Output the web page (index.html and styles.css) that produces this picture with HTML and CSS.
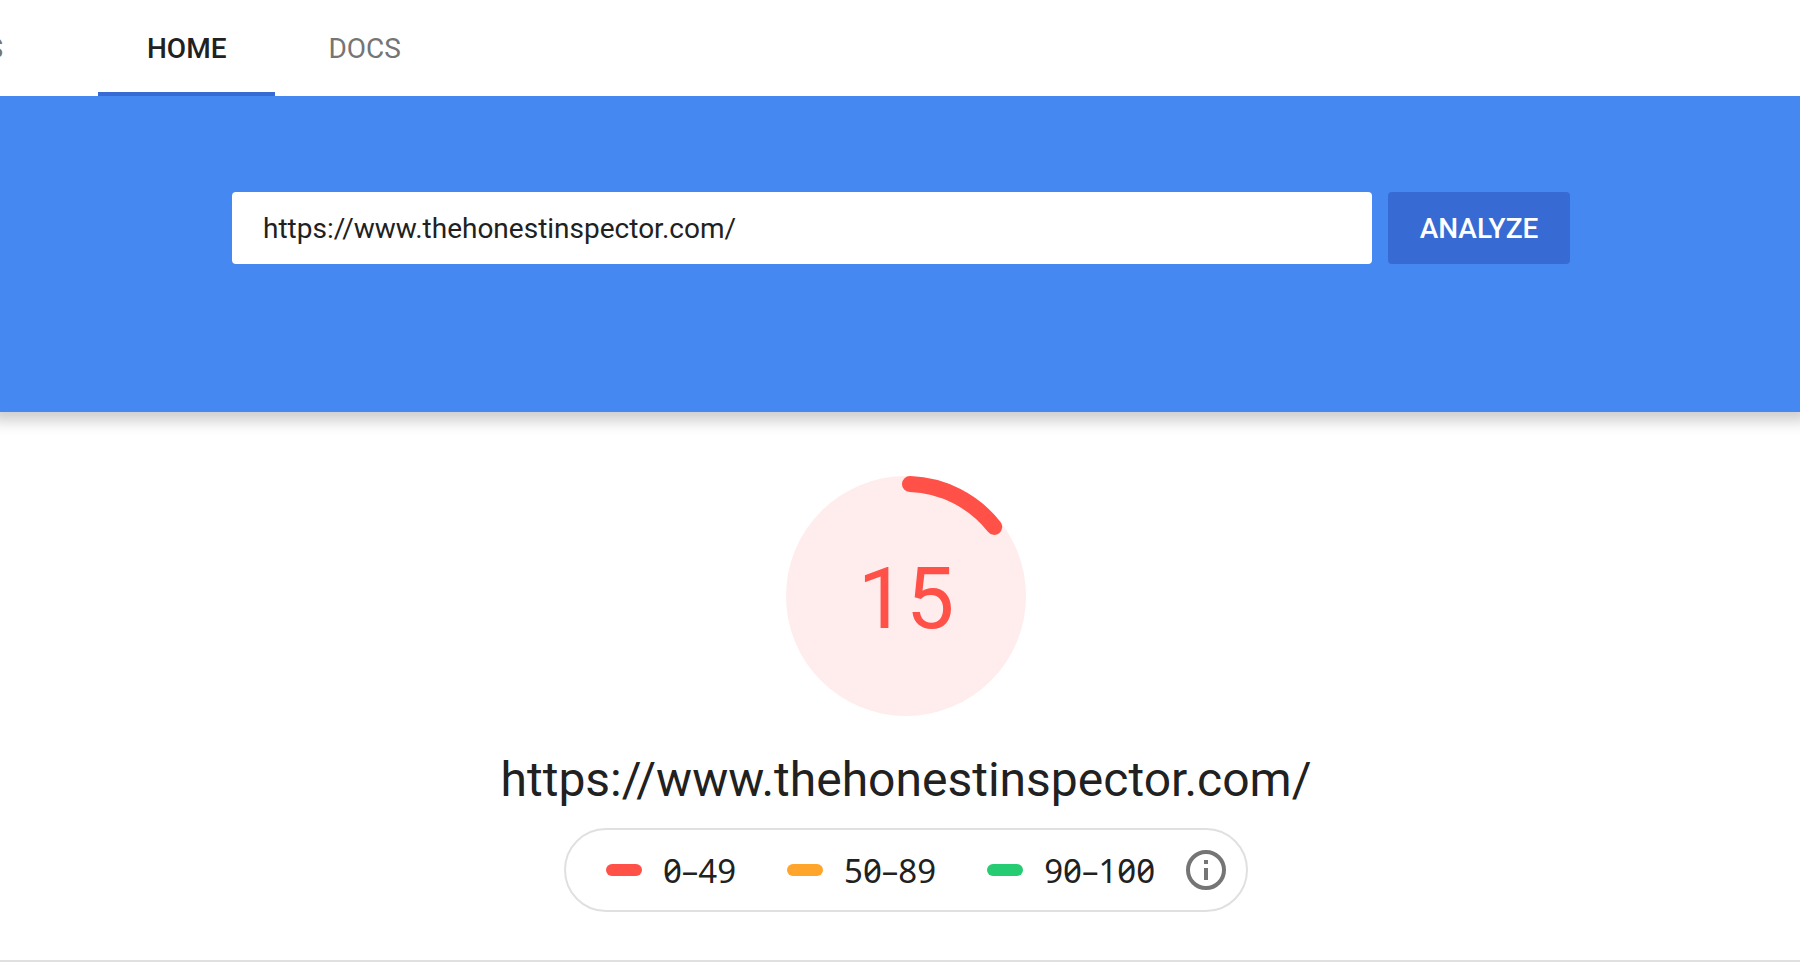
FILE: index.html
```html
<!doctype html>
<html lang="en">

<head>
    <meta charset="utf-8">
    <title>PageSpeed Insights</title>
    <link rel="stylesheet" href="styles.css">
</head>

<body>
    <header class="topbar">
        <span class="brand">S</span>
        <nav class="tabs">
            <a href="#home" class="tab active">HOME</a>
            <a href="#docs" class="tab">DOCS</a>
        </nav>
    </header>

    <form class="hero">
        <div class="search">
            <input type="text" class="url" name="url" aria-label="Web page URL" value="https://www.thehonestinspector.com/">
            <button type="submit" class="analyze">ANALYZE</button>
        </div>
    </form>

    <main class="report">
        <div class="gauge">
            <svg class="gauge-ring" viewBox="0 0 240 240">
                <circle cx="120" cy="120" r="120" fill="#ffeded" />
                <path d="M124 8.1A112 112 0 0 1 208.2 50.9" fill="none" stroke="#ff5148" stroke-width="16" stroke-linecap="round" />
            </svg>
            <span class="score">15</span>
        </div>

        <h1 class="tested">https://www.thehonestinspector.com/</h1>

        <div class="scale">
            <span class="range fail">0–49</span>
            <span class="range average">50–89</span>
            <span class="range pass">90–100</span>
            <button type="button" class="info" aria-label="About the score">
                <svg width="40" height="40" viewBox="0 0 40 40">
                    <circle cx="20" cy="20" r="18" fill="none" stroke="#757575" stroke-width="4" />
                    <path d="M18 10h4v4h-4zM18 18h4v12h-4z" fill="#757575" />
                </svg>
            </button>
        </div>
    </main>
</body>

</html>
```

FILE: styles.css
```css
* {
    box-sizing: border-box;
}
body {
    margin: 0;
    background: #fff;
    color: #212121;
    font-family: Roboto, "Liberation Sans", sans-serif;
    font-size: 28px;
}
.topbar {
    position: relative;
    z-index: 1;
    display: flex;
    height: 96px;
    background: #fff;
}
.brand {
    display: flex;
    justify-content: flex-end;
    width: 3px;
    margin-right: 95px;
    padding-top: 4px;
    overflow: hidden;
    color: #757575;
    line-height: 90px;
}
.tabs {
    display: flex;
    gap: 4px;
}
.tab {
    padding: 4px 49px 0;
    line-height: 90px;
    height: 96px;
    border-bottom: 4px solid transparent;
    color: #757575;
    text-decoration: none;
}
.tab.active {
    border-color: #376ad3;
    color: #212121;
    font-weight: 500;
}
.hero {
    position: relative;
    padding: 96px 230px 148px 232px;
    background: #4588f1;
    box-shadow: 0 0 14px 9px rgba(0, 0, 0, 0.2);
}
.search {
    display: flex;
    gap: 16px;
}
.url {
    flex: 1;
    min-width: 0;
    height: 72px;
    padding: 0 31px;
    border: 0;
    border-radius: 4px;
    background: #fff;
    color: #212121;
    font: inherit;
}
.analyze {
    min-width: 182px;
    height: 72px;
    padding: 0 31px;
    border: 0;
    border-radius: 4px;
    background: #376ad3;
    color: #fff;
    font: inherit;
    font-weight: 500;
}
.report {
    display: flex;
    flex-direction: column;
    align-items: center;
    padding: 64px 0 48px 12px;
    border-bottom: 2px solid #e0e0e0;
}
.gauge {
    display: grid;
    place-items: center;
    color: #ff5148;
}
.gauge-ring,
.score {
    grid-area: 1 / 1;
}
.gauge-ring {
    width: 240px;
    height: 240px;
}
.score {
    padding-top: 4px;
    font-size: 86px;
}
.tested {
    margin: 32px 0 16px;
    font-size: 48px;
    font-weight: 400;
    line-height: 64px;
}
.scale {
    display: flex;
    align-items: center;
    height: 84px;
    padding: 0 20px 0 40px;
    border: 2px solid #e0e0e0;
    border-radius: 42px;
    font-family: "Noto Sans", sans-serif;
    font-feature-settings: "zero";
    font-size: 33px;
}
.range {
    display: flex;
    align-items: center;
    gap: 21px;
    margin-right: 51px;
}
.range::before {
    content: "";
    width: 36px;
    height: 12px;
    border-radius: 6px;
}
.fail::before {
    background: #ff5148;
}
.average::before {
    background: #ffa52b;
}
.pass::before {
    background: #26cc72;
}
.pass {
    margin-right: 31px;
}
.info {
    display: flex;
    padding: 0;
    border: 0;
    background: none;
}
```
